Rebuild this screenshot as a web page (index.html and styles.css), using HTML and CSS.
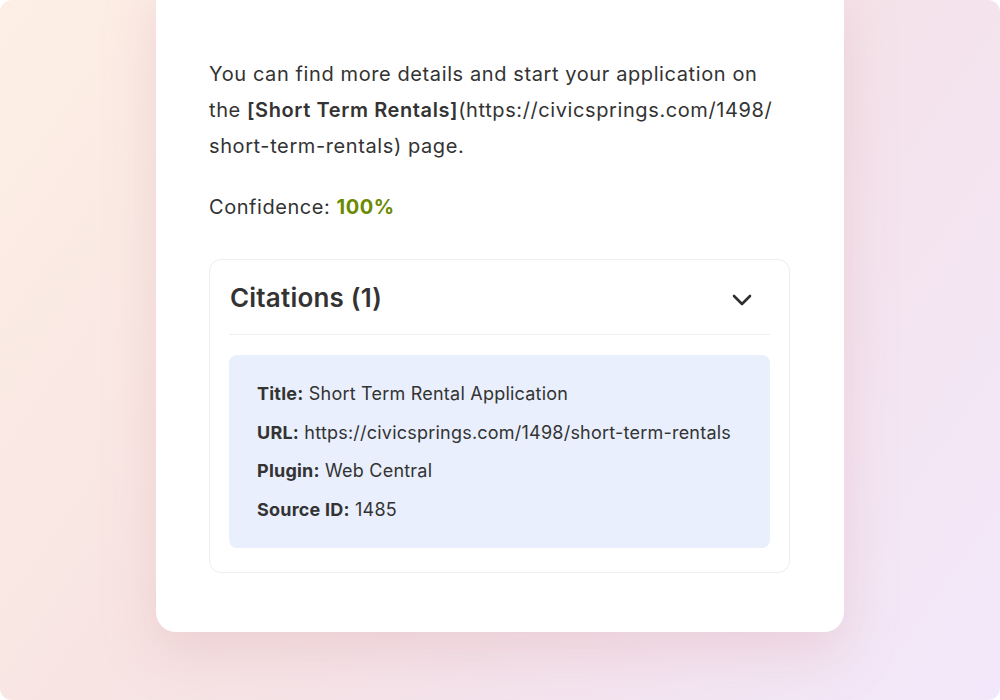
FILE: index.html
```html
<!DOCTYPE html>
<html>
<head>
<meta charset="utf-8">
<link rel="stylesheet" href="styles.css">
</head>
<body>
<div class="page">
  <div class="card">
    <p class="answer">You can find more details and start your application on the <strong>[Short Term Rentals]</strong>(https://civicsprings.com/1498/<wbr>short-term-rentals) page.</p>
    <p class="confidence">Confidence: <span class="score">100%</span></p>
    <div class="citations">
      <div class="cit-head">
        <span class="cit-title">Citations (1)</span>
        <svg class="chev" width="20" height="12" viewBox="0 0 20 12"><path d="M2 2 L10 10 L18 2" fill="none" stroke="#2f2f2f" stroke-width="2.6" stroke-linecap="round" stroke-linejoin="round"/></svg>
      </div>
      <div class="cit-body">
        <div class="row"><b>Title:</b> Short Term Rental Application</div>
        <div class="row"><b>URL:</b> https://civicsprings.com/1498/short-term-rentals</div>
        <div class="row"><b>Plugin:</b> Web Central</div>
        <div class="row"><b>Source ID:</b> 1485</div>
      </div>
    </div>
  </div>
</div>
</body>
</html>
```

FILE: styles.css
```css
html, body {
  margin: 0;
  padding: 0;
  background: #ffffff;
}
body {
  font-family: Inter, "Noto Sans", sans-serif;
  color: #333333;
}
.page {
  width: 1000px;
  height: 700px;
  border-radius: 12px;
  overflow: hidden;
  background: linear-gradient(125deg, #fdefe5 0%, #f7e4e3 40%, #f4e3ec 65%, #f2e8fb 100%);
  display: flex;
  justify-content: center;
  align-items: flex-start;
}
.card {
  width: 688px;
  box-sizing: border-box;
  margin-top: -20px;
  padding: 76px 54px 59px 53px;
  background: #ffffff;
  border-radius: 20px;
  box-shadow: 0 20px 50px rgba(220, 170, 175, 0.35);
}
.answer {
  margin: 0;
  max-width: 572px;
  font-size: 20px;
  line-height: 36px;
  letter-spacing: 0.6px;
  color: #333333;
}
.answer strong {
  font-weight: 600;
}
.confidence {
  margin: 25px 0 0;
  font-size: 20px;
  line-height: 36px;
  letter-spacing: 0.55px;
}
.score {
  color: #6a8a00;
  font-weight: 700;
}
.citations {
  margin-top: 34px;
  border: 1px solid #ededed;
  border-radius: 12px;
  padding: 0 19px 24px;
}
.cit-head {
  height: 74px;
  display: flex;
  align-items: center;
  justify-content: space-between;
  padding: 0 18px 0 1px;
  border-bottom: 1px solid #efefef;
}
.cit-title {
  font-size: 26px;
  font-weight: 600;
  letter-spacing: 0.2px;
  color: #333333;
}
.chev {
  margin-top: 5px;
}
.cit-body {
  margin-top: 20px;
  background: #e9effc;
  border-radius: 8px;
  padding: 26px 28px 25px;
  display: flex;
  flex-direction: column;
  gap: 12.5px;
}
.row {
  font-size: 18px;
  line-height: 26px;
  letter-spacing: 0.22px;
  color: #333333;
}
.row b {
  font-weight: 700;
}
```
